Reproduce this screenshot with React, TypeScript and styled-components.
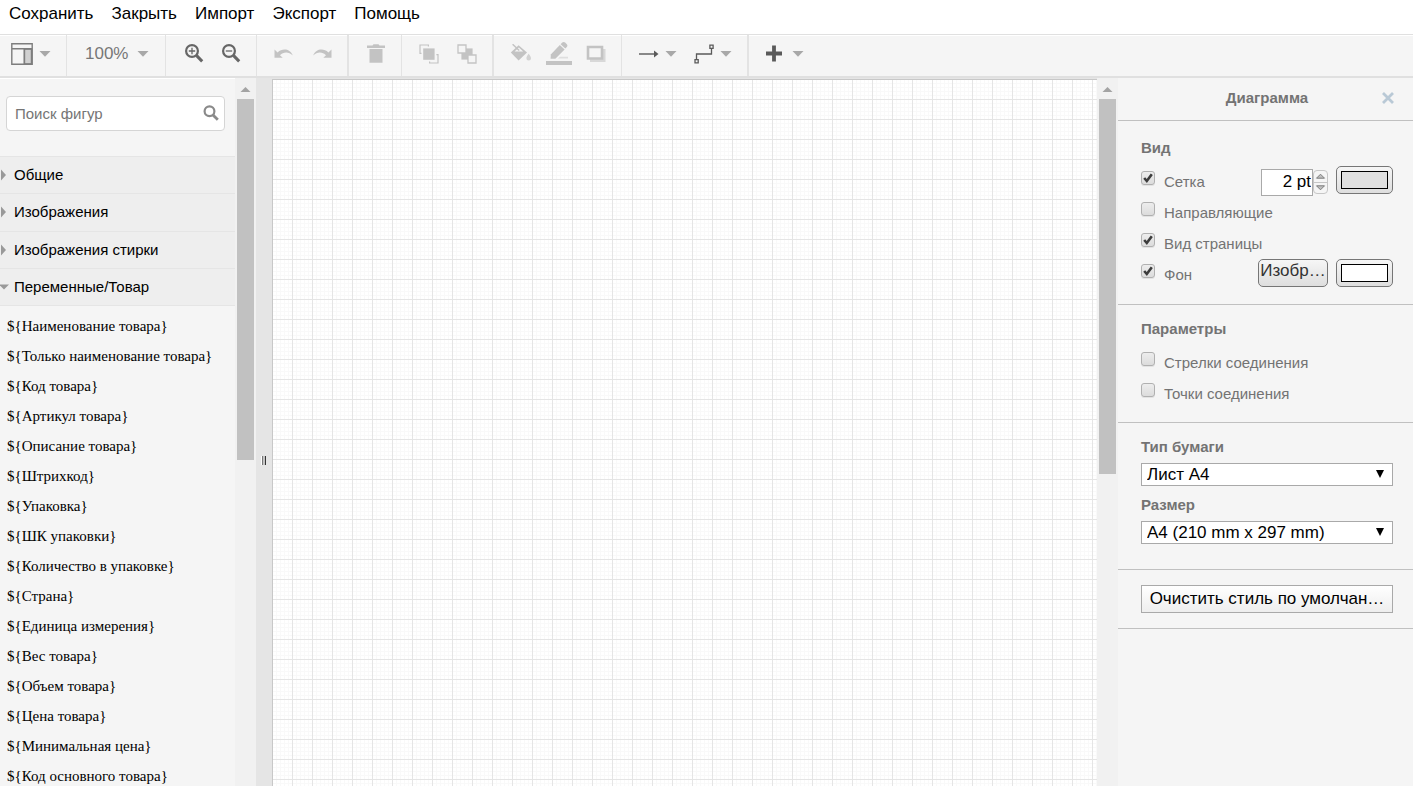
import React from 'react';
import styled, { createGlobalStyle } from 'styled-components';

const sans = '"Liberation Sans", Arial, sans-serif';
const serif = '"Liberation Serif", "Times New Roman", serif';

const GlobalStyle = createGlobalStyle`
  *, *::before, *::after { box-sizing: border-box; }
  body { margin: 0; font-family: ${sans}; background: #fff; color: #000; }
  button, input, select { font-family: inherit; }
`;

const Shell = styled.div`
  display: flex;
  flex-direction: column;
  height: 100vh;
  overflow: hidden;
`;

const MenuBar = styled.nav`
  display: flex;
  flex: none;
  height: 34px;
  padding: 4px 9px;
  gap: 18px;
`;

const MenuItem = styled.button`
  height: 20px;
  padding: 0;
  border: 0;
  background: none;
  font-size: 17px;
  line-height: 20px;
  color: #000;
`;

const Toolbar = styled.div`
  display: flex;
  flex: none;
  height: 44px;
  border-top: 1px solid #e0e0e0;
  border-bottom: 2px solid #e0e0e0;
  background: #f5f5f5;
  box-shadow: inset 0 1px 0 #fff;
`;

const ToolGroup = styled.div<{ $width?: number; $start: number; $gap: number; $thick?: boolean }>`
  display: flex;
  align-items: center;
  flex: none;
  width: ${(p) => (p.$width ? `${p.$width}px` : 'auto')};
  padding-left: ${(p) => p.$start}px;
  padding-bottom: 4px;
  gap: ${(p) => p.$gap}px;
  border-right: ${(p) => (p.$width ? (p.$thick ? 2 : 1) : 0)}px solid #e3e3e3;
`;

const ToolButton = styled.button`
  display: flex;
  align-items: center;
  gap: 6px;
  padding: 0;
  border: 0;
  background: none;
  color: #666;
  font-size: 17px;
  line-height: 20px;

  &:disabled { color: #c3c3c3; }
`;

const ZoomButton = styled(ToolButton)`
  gap: 9px;
  color: #777;
`;

const Workspace = styled.div`
  display: flex;
  flex: 1;
  min-height: 0;
`;

const Sidebar = styled.aside`
  flex: none;
  width: 235px;
  overflow: hidden;
  border-top: 1px solid #fff;
  background: #f5f5f5;
`;

const SearchBox = styled.label`
  display: flex;
  align-items: center;
  height: 35px;
  margin: 17px 10px 25px 6px;
  padding: 0 5px 2px 8px;
  border: 1px solid #d5d5d5;
  border-radius: 4px;
  background: #fff;
`;

const SearchInput = styled.input`
  flex: 1;
  min-width: 0;
  padding: 2px 0 0;
  border: 0;
  outline: 0;
  background: none;
  font-size: 15px;
  line-height: 20px;

  &::placeholder { color: #757575; opacity: 1; }
`;

const Categories = styled.div`
  display: grid;
  grid-auto-rows: 1fr;
  height: 150px;
  border-bottom: 1px solid #e5e5e5;
`;

const Category = styled.button`
  display: flex;
  align-items: center;
  padding: 0;
  border: 0;
  border-top: 1px solid #e5e5e5;
  background: #eee;
  font-size: 15px;
  line-height: 20px;
  color: #000;
  text-align: left;
`;

const CategoryArrow = styled.svg`
  flex: none;
  width: 14px;
  height: 12px;
  fill: #999;
`;

const Variables = styled.ul`
  margin: 0;
  padding: 5px 0 0 7px;
  list-style: none;
  font-family: ${serif};
  font-size: 15px;
  line-height: 30px;
  white-space: nowrap;
`;

const Track = styled.div`
  display: flex;
  flex-direction: column;
  flex: none;
  width: 21px;
  padding: 0 2px;
  background: #f1f1f1;
`;

const TrackArrow = styled.svg`
  flex: none;
  width: 17px;
  height: 21px;
  fill: #a3a3a3;
`;

const Thumb = styled.div<{ $share: number }>`
  height: ${(p) => p.$share}%;
  background: #c1c1c1;
`;

const Splitter = styled.div`
  display: flex;
  align-items: center;
  justify-content: center;
  flex: none;
  width: 16px;
  padding-top: 56px;
  background: #e5e5e5;
`;

const CanvasArea = styled.main`
  flex: 1;
  min-width: 0;
  padding-top: 1px;
  background: #e5e5e5;
`;

const Sheet = styled.div`
  height: 100%;
  border-top: 1px solid #c8c8c8;
  border-left: 1px solid #c8c8c8;
  background-color: #fff;
  background-image:
    linear-gradient(#e5e5e5 1px, transparent 1px),
    linear-gradient(90deg, #e5e5e5 1px, transparent 1px),
    linear-gradient(#f9f9f9 1px, transparent 1px),
    linear-gradient(90deg, #f9f9f9 1px, transparent 1px);
  background-size: 20px 20px, 20px 20px, 4px 4px, 4px 4px;
  background-position: -1px -1px;
`;

const Panel = styled.aside`
  flex: none;
  width: 295px;
  background: #f5f5f5;
  color: #737373;
  font-size: 15px;
  line-height: 20px;
`;

const PanelHeader = styled.header`
  display: grid;
  grid-template-columns: 12px 1fr 12px;
  align-items: center;
  height: 43px;
  padding: 0 19px 2px 22px;
  border-bottom: 1px solid #c0c0c0;
`;

const PanelTitle = styled.h2`
  grid-column: 2;
  margin: 0;
  font-size: 15px;
  line-height: 20px;
  text-align: center;
`;

const CloseButton = styled.button`
  display: flex;
  padding: 0;
  border: 0;
  background: none;
  color: #b9c9d6;
`;

const Section = styled.section<{ $top: number; $bottom: number }>`
  padding: ${(p) => p.$top}px 20px ${(p) => p.$bottom}px 23px;
  border-bottom: 1px solid #c0c0c0;
`;

const SectionTitle = styled.h3`
  margin: 0 0 8px;
  font-size: 15px;
  line-height: 20px;
`;

const OptionRow = styled.div`
  display: flex;
  align-items: flex-start;
  height: 31px;
`;

const OptionLabel = styled.label`
  display: flex;
  flex: 1;
  gap: 9px;
  padding-top: 5px;
  white-space: nowrap;
`;

const OptionText = styled.span`
  padding-top: 1px;
`;

const BoxWrap = styled.span`
  display: grid;
  width: 14px;
  height: 14px;

  & > * { grid-area: 1 / 1; }
`;

const Box = styled.input`
  appearance: none;
  width: 14px;
  height: 14px;
  margin: 0;
  border: 1px solid #b0b0b0;
  border-radius: 3px;
  background: linear-gradient(#ededed, #dcdcdc);
  box-shadow: 0 1px 0 #e3e3e3;
`;

const Tick = styled.svg`
  width: 14px;
  height: 14px;
  pointer-events: none;
`;

const GridStep = styled.input`
  width: 52px;
  height: 27px;
  margin-top: 3px;
  padding: 0 1px 2px;
  border: 1px solid #a9a9a9;
  background: #fff;
  font-size: 17px;
  text-align: right;
  color: #000;
`;

const Stepper = styled.div`
  display: grid;
  width: 15px;
  height: 24px;
  margin: 4px 8px 0 0;
  border: 1px solid #c6c6c6;
  border-radius: 4px;
`;

const StepButton = styled.button`
  display: flex;
  align-items: center;
  justify-content: center;
  padding: 0;
  border: 0;
  background: none;
  color: #7c7c7c;

  & + & { border-top: 1px solid #c6c6c6; }
`;

const SoftButton = styled.button`
  height: 28px;
  border: 1px solid #767676;
  border-radius: 5px;
  background: linear-gradient(#f6f6f6, #dedede);
`;

const ImageButton = styled(SoftButton)`
  width: 70px;
  margin-right: 8px;
  padding: 0 0 4px;
  font-size: 17px;
  line-height: 20px;
  color: #333;
`;

const ColorButton = styled(SoftButton)`
  width: 57px;
  padding: 4px;
`;

const Swatch = styled.span<{ $color: string }>`
  display: block;
  height: 18px;
  border: 1px solid #000;
  background: ${(p) => p.$color};
`;

const Field = styled.label`
  display: block;
  font-weight: bold;

  & + & { margin-top: 9px; }
`;

const SelectWrap = styled.span`
  display: block;
  position: relative;
  margin-top: 6px;
`;

const Select = styled.select`
  display: block;
  appearance: none;
  width: 100%;
  height: 23px;
  padding: 0 24px 0 5px;
  border: 1px solid #a9a9a9;
  border-radius: 0;
  background: #fff;
  font-size: 17px;
  line-height: 20px;
  color: #000;
`;

const SelectArrow = styled.svg`
  position: absolute;
  top: 7px;
  right: 9px;
  width: 8px;
  height: 8px;
  pointer-events: none;
`;

const ClearButton = styled.button`
  display: block;
  width: 100%;
  height: 28px;
  padding: 0;
  border: 1px solid #a9a9a9;
  background: linear-gradient(#fff, #eee);
  font-size: 17px;
  line-height: 20px;
  color: #000;
  white-space: nowrap;
`;

const Caret = () => (
  <svg width="12" height="6" viewBox="0 0 12 6" fill="#a8a8a8">
    <path d="M0.5 0h11L6 5.8z" />
  </svg>
);

const LayoutIcon = () => (
  <svg width="22" height="22" viewBox="0 0 22 22" fill="none" stroke="#7d7d7d" strokeWidth="1.4">
    <path d="M13.5 6h7v15h-7z" fill="#d0d0d0" />
    <path d="M0.8 0.8h20.4v20.4H0.8zM0.8 5.7h20.4M13.3 5.7v15.5" />
  </svg>
);

const Magnifier = ({ plus }: { plus?: boolean }) => (
  <svg width="19" height="19" viewBox="0 0 19 19" fill="none" stroke="#666">
    <circle cx="7" cy="7" r="5.9" strokeWidth="2.2" />
    <path d="M11.6 11.6l5.6 5.8" strokeWidth="3" />
    <path d={plus ? 'M3.8 7h6.4M7 3.800v6.400' : 'M3.8 7h6.4'} strokeWidth="1.3" />
  </svg>
);

const UndoIcon = () => (
  <svg width="20" height="12" viewBox="0 0 20 12" fill="currentColor">
    <path d="M0.5 1.5v8.2h8.2L6 7.2C9.5 3.6 15 3.6 18.8 7.6 16 0.6 8.500 0 3.6 4.4z" />
  </svg>
);

const RedoIcon = () => (
  <svg width="20" height="12" viewBox="0 0 20 12" fill="currentColor">
    <path d="M19.5 1.5v8.2h-8.2L14 7.2C10.5 3.6 5 3.6 1.2 7.6 4 0.6 11.500 0 16.4 4.4z" />
  </svg>
);

const TrashIcon = () => (
  <svg width="20" height="20" viewBox="0 0 20 20" fill="currentColor">
    <path d="M1 1.500h5.500l1-1.200h5l1 1.200H19v2.400H1zM3.500 5h13v13.800h-13z" />
  </svg>
);

const FrontIcon = () => (
  <svg width="20" height="20" viewBox="0 0 20 20" fill="none" stroke="currentColor" strokeWidth="1.2">
    <path d="M4.2 4.4h11.4v11.4H4.2z" fill="currentColor" stroke="none" />
    <path d="M2.5 9.4H1V1h8.4v1.6M17.4 10.6H19V19h-8.4v-1.6" />
  </svg>
);

const BackIcon = () => (
  <svg width="20" height="20" viewBox="0 0 20 20" stroke="currentColor" strokeWidth="1.3">
    <path d="M4.4 4.4h11.2v11.2H4.4z" fill="currentColor" stroke="none" />
    <path d="M1 1h8v8H1zM11 11h8v8h-8z" fill="#f5f5f5" />
  </svg>
);

const FillIcon = () => (
  <svg width="22" height="20" viewBox="0 0 22 20" fill="none" stroke="currentColor">
    <path d="M0.800 8.600L8.600 1.200l8.400 7.400-8.400 8z" fill="currentColor" stroke="none" />
    <path d="M4.600 7.600L8.800 3.600l4.400 4z" fill="#f5f5f5" stroke="none" />
    <path d="M2.600 0.200l6.600 6.200" strokeWidth="1.400" />
    <path d="M18.600 9.800c1.500 2 2.400 3.200 2.400 4.400a2.300 2.300 0 0 1-4.600 0c0-1.200.8-2.400 2.200-4.400z" fill="currentColor" stroke="none" opacity="0.7" />
  </svg>
);

const PenIcon = () => (
  <svg width="26" height="23" viewBox="0 0 26 23" fill="currentColor">
    <path d="M4.600 16.800l.2-4.400L13.800 3l4.800 4.400-9.200 9.400z" />
    <path d="M14.600 2.200l1.600-1.600q1.600-1.200 3 0l1.600 1.600q1.200 1.400 0 2.800l-1.500 1.600z" />
    <path d="M12 16.600l2-1.800h8v1.800z" opacity="0.45" />
    <path d="M0 19h26v4H0z" />
  </svg>
);

const ShadowIcon = () => (
  <svg width="20" height="17" viewBox="0 0 20 17" fill="none">
    <path d="M4 13.5h12.5V4H19.500v13H4z" fill="#d8d8d8" />
    <path d="M2 2h14v11.500H2z" stroke="currentColor" strokeWidth="2.600" />
  </svg>
);

const ArrowIcon = () => (
  <svg width="20" height="8" viewBox="0 0 20 8">
    <path d="M0 4h16" stroke="#5a5a5a" strokeWidth="1.4" />
    <path d="M15 0.400L19.500 4l-4.500 3.600z" fill="#5a5a5a" />
  </svg>
);

const ConnectorIcon = () => (
  <svg width="20" height="20" viewBox="0 0 20 20" fill="none" stroke="#5a5a5a" strokeWidth="1.3">
    <path d="M2.5 15.5V10h15V4.5" />
    <path d="M1 15.7h3.200v3.200H1zM15.900 1.100h3.200v3.200h-3.200z" />
  </svg>
);

const PlusIcon = () => (
  <svg width="18" height="18" viewBox="0 0 18 18" stroke="#5a5a5a" strokeWidth="3.800">
    <path d="M1 8.500h16M9 0.500v16" />
  </svg>
);

const Scrollbar = ({ share }: { share: number }) => (
  <Track aria-hidden="true">
    <TrackArrow viewBox="0 0 17 21">
      <path d="M3.5 14h10l-5-5z" />
    </TrackArrow>
    <Thumb $share={share} />
  </Track>
);

const Option = ({ text, checked, children }: { text: string; checked?: boolean; children?: React.ReactNode }) => (
  <OptionRow>
    <OptionLabel>
      <BoxWrap>
        <Box type="checkbox" defaultChecked={checked} />
        {checked && (
          <Tick viewBox="0 0 14 14">
            <path d="M3.200 7l2.600 3L10.800 3.200" fill="none" stroke="#3c3c3c" strokeWidth="2.600" />
          </Tick>
        )}
      </BoxWrap>
      <OptionText>{text}</OptionText>
    </OptionLabel>
    {children}
  </OptionRow>
);

const PaperSelect = ({ title, value }: { title: string; value: string }) => (
  <Field>
    {title}
    <SelectWrap>
      <Select defaultValue={value}>
        <option>{value}</option>
      </Select>
      <SelectArrow viewBox="0 0 8 8">
        <path d="M0 0h8L4 8z" />
      </SelectArrow>
    </SelectWrap>
  </Field>
);

const menu = ['Сохранить', 'Закрыть', 'Импорт', 'Экспорт', 'Помощь'];

const categories = [
  { name: 'Общие', open: false },
  { name: 'Изображения', open: false },
  { name: 'Изображения стирки', open: false },
  { name: 'Переменные/Товар', open: true },
];

const variables = [
  'Наименование товара',
  'Только наименование товара',
  'Код товара',
  'Артикул товара',
  'Описание товара',
  'Штрихкод',
  'Упаковка',
  'ШК упаковки',
  'Количество в упаковке',
  'Страна',
  'Единица измерения',
  'Вес товара',
  'Объем товара',
  'Цена товара',
  'Минимальная цена',
  'Код основного товара',
];

export default function App() {
  return (
    <Shell>
      <GlobalStyle />
      <MenuBar>
        {menu.map((name) => (
          <MenuItem key={name}>{name}</MenuItem>
        ))}
      </MenuBar>

      <Toolbar>
        <ToolGroup $width={67} $start={11} $gap={0}>
          <ToolButton aria-label="Вид"><LayoutIcon /><Caret /></ToolButton>
        </ToolGroup>
        <ToolGroup $width={99} $start={18} $gap={0}>
          <ZoomButton>100%<Caret /></ZoomButton>
        </ToolGroup>
        <ToolGroup $width={91} $start={19} $gap={18}>
          <ToolButton aria-label="Увеличить"><Magnifier plus /></ToolButton>
          <ToolButton aria-label="Уменьшить"><Magnifier /></ToolButton>
        </ToolGroup>
        <ToolGroup $width={92} $start={17} $gap={18} $thick>
          <ToolButton disabled aria-label="Отменить"><UndoIcon /></ToolButton>
          <ToolButton disabled aria-label="Повторить"><RedoIcon /></ToolButton>
        </ToolGroup>
        <ToolGroup $width={53} $start={17} $gap={0}>
          <ToolButton disabled aria-label="Удалить"><TrashIcon /></ToolButton>
        </ToolGroup>
        <ToolGroup $width={92} $start={17} $gap={18} $thick>
          <ToolButton disabled aria-label="На передний план"><FrontIcon /></ToolButton>
          <ToolButton disabled aria-label="На задний план"><BackIcon /></ToolButton>
        </ToolGroup>
        <ToolGroup $width={128} $start={16} $gap={14}>
          <ToolButton disabled aria-label="Заливка"><FillIcon /></ToolButton>
          <ToolButton disabled aria-label="Цвет линии"><PenIcon /></ToolButton>
          <ToolButton disabled aria-label="Тень"><ShadowIcon /></ToolButton>
        </ToolGroup>
        <ToolGroup $width={127} $start={17} $gap={17} $thick>
          <ToolButton aria-label="Соединение"><ArrowIcon /><Caret /></ToolButton>
          <ToolButton aria-label="Точки пути"><ConnectorIcon /><Caret /></ToolButton>
        </ToolGroup>
        <ToolGroup $start={16} $gap={0}>
          <ZoomButton aria-label="Вставить"><PlusIcon /><Caret /></ZoomButton>
        </ToolGroup>
      </Toolbar>

      <Workspace>
        <Sidebar>
          <SearchBox>
            <SearchInput type="text" placeholder="Поиск фигур" aria-label="Поиск фигур" />
            <svg width="16" height="16" viewBox="0 0 16 16" fill="none" stroke="#8a8a8a">
              <circle cx="6.5" cy="6.2" r="4.9" strokeWidth="2.2" />
              <path d="M10 10l4.8 4.8" strokeWidth="2.8" />
            </svg>
          </SearchBox>
          <Categories>
            {categories.map((c) => (
              <Category key={c.name} aria-expanded={c.open}>
                <CategoryArrow viewBox="0 0 14 12">
                  <path d={c.open ? 'M-1 3.500h10l-5 5z' : 'M1 0.500v11l5-5.500z'} />
                </CategoryArrow>
                {c.name}
              </Category>
            ))}
          </Categories>
          <Variables>
            {variables.map((v) => (
              <li key={v}>{'${' + v + '}'}</li>
            ))}
          </Variables>
        </Sidebar>
        <Scrollbar share={51} />
        <Splitter>
          <svg width="6" height="9" viewBox="0 0 6 9">
            <path d="M0 0h1v9H0z" fill="#fff" />
            <path d="M1 0h1v9H1z" fill="#777" />
            <path d="M2 0h2v9H2z" fill="#c4c4c4" />
            <path d="M4 0h1v9H4z" fill="#333" />
          </svg>
        </Splitter>
        <CanvasArea>
          <Sheet />
        </CanvasArea>
        <Scrollbar share={53} />

        <Panel>
          <PanelHeader>
            <PanelTitle>Диаграмма</PanelTitle>
            <CloseButton aria-label="Закрыть панель">
              <svg width="12" height="12" viewBox="0 0 12 12" stroke="currentColor" strokeWidth="2.8">
                <path d="M1 1l10 10M11 1L1 11" />
              </svg>
            </CloseButton>
          </PanelHeader>

          <Section $top={17} $bottom={14}>
            <SectionTitle>Вид</SectionTitle>
            <Option text="Сетка" checked>
              <GridStep type="text" defaultValue="2 pt" aria-label="Шаг сетки" />
              <Stepper>
                <StepButton aria-label="Больше">
                  <svg width="11" height="6" viewBox="0 0 11 6"><path d="M1.5 5.2h8l-4-4z" fill="#c0c0c0" stroke="currentColor" /></svg>
                </StepButton>
                <StepButton aria-label="Меньше">
                  <svg width="11" height="6" viewBox="0 0 11 6"><path d="M1.5 0.8h8l-4 4z" fill="#c0c0c0" stroke="currentColor" /></svg>
                </StepButton>
              </Stepper>
              <ColorButton aria-label="Цвет сетки"><Swatch $color="#e0e0e0" /></ColorButton>
            </Option>
            <Option text="Направляющие" />
            <Option text="Вид страницы" checked />
            <Option text="Фон" checked>
              <ImageButton>Изобр…</ImageButton>
              <ColorButton aria-label="Цвет фона"><Swatch $color="#fff" /></ColorButton>
            </Option>
          </Section>

          <Section $top={14} $bottom={13}>
            <SectionTitle>Параметры</SectionTitle>
            <Option text="Стрелки соединения" />
            <Option text="Точки соединения" />
          </Section>

          <Section $top={14} $bottom={25}>
            <PaperSelect title="Тип бумаги" value="Лист А4" />
            <PaperSelect title="Размер" value="A4 (210 mm x 297 mm)" />
          </Section>

          <Section $top={15} $bottom={15}>
            <ClearButton>Очистить стиль по умолчан…</ClearButton>
          </Section>
        </Panel>
      </Workspace>
    </Shell>
  );
}
